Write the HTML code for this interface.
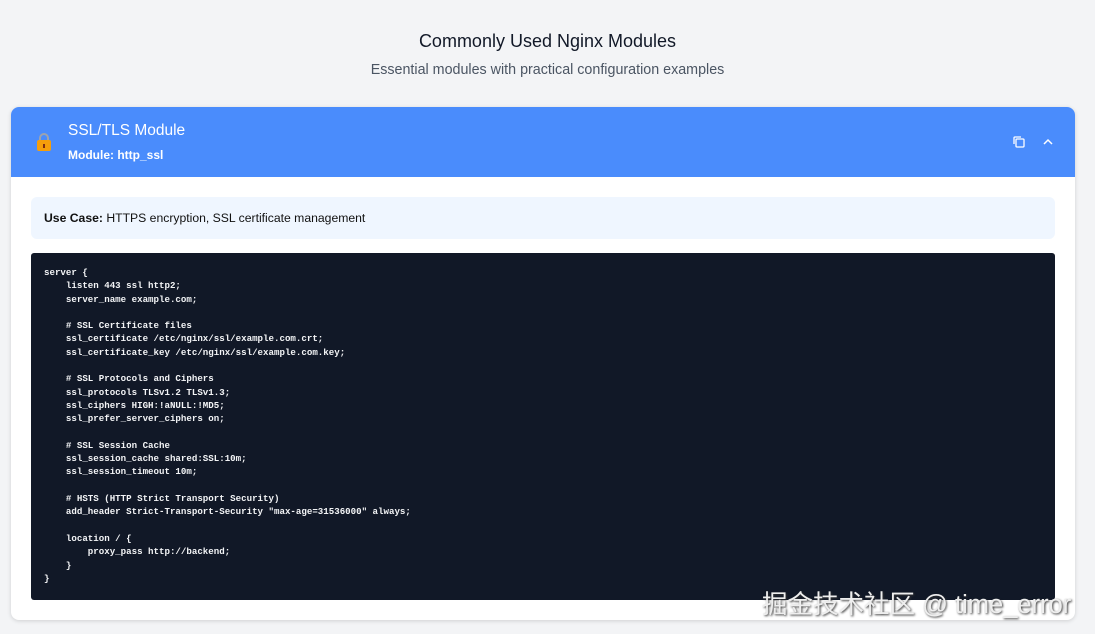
<!DOCTYPE html>
<html><head><meta charset="utf-8"><style>
body{margin:0;width:1095px;height:634px;background:#f3f4f6;font-family:"Liberation Sans",sans-serif;position:relative;overflow:hidden}
h1{position:absolute;top:31px;left:0;width:1095px;text-align:center;margin:0;font-size:18px;font-weight:400;color:#111827}
.sub{position:absolute;top:62px;left:0;width:1095px;text-align:center;font-size:14.3px;color:#4b5563}
.card{position:absolute;left:11px;top:107px;width:1064px;height:513px;background:#fff;border-radius:8px;box-shadow:0 1px 4px rgba(0,0,0,.15);overflow:hidden}
.hd{height:70px;background:#4a8cfc;position:relative;color:#fff}
.t{position:absolute;left:57px;top:15px;font-size:15.5px}
.m{position:absolute;left:57px;top:41px;font-size:12px;font-weight:bold}
.uc{position:absolute;left:20px;top:90px;width:1024px;height:42px;background:#eff6ff;border-radius:6px;font-size:12.2px;line-height:42px;box-sizing:border-box;padding-left:13px;color:#111}
pre{position:absolute;left:20px;top:146px;width:1024px;height:347px;margin:0;background:#111827;border-radius:3px;color:#f3f4f6;font-family:"Liberation Mono","DejaVu Sans Mono",monospace;font-size:9.15px;line-height:13.3px;padding:13px 13px;box-sizing:border-box;font-weight:bold}
.wm{position:absolute;left:762px;top:584px;font-size:25.5px;color:#eee;font-family:"Liberation Sans","Noto Sans CJK SC",sans-serif;text-shadow:1px 1px 2px #333}
</style></head><body>
<h1>Commonly Used Nginx Modules</h1>
<div class="sub">Essential modules with practical configuration examples</div>
<div class="card">
<div class="hd">
<svg style="position:absolute;left:25px;top:25px" width="16" height="20" viewBox="0 0 16 20"><path d="M4 9V6a4 4 0 0 1 8 0v3" fill="none" stroke="#9ca3af" stroke-width="2"/><rect x="1" y="8" width="14" height="11" rx="2" fill="#f59e0b"/><rect x="7" y="12" width="2" height="4" fill="#7c2d12"/></svg>
<div class="t">SSL/TLS Module</div>
<div class="m">Module: http_ssl</div>
<svg style="position:absolute;left:1001px;top:28px" width="14" height="14" viewBox="0 0 14 14" fill="none" stroke="#fff" stroke-width="1.3"><rect x="4" y="4" width="8" height="8" rx="1"/><path d="M9 2H3a1 1 0 0 0-1 1v6"/></svg>
<svg style="position:absolute;left:1031px;top:30px" width="12" height="10" viewBox="0 0 12 10" fill="none" stroke="#fff" stroke-width="1.5"><path d="M2 7l4-4 4 4"/></svg>
</div>
<div class="uc"><b>Use Case:</b> HTTPS encryption, SSL certificate management</div>
<pre>server {
    listen 443 ssl http2;
    server_name example.com;

    # SSL Certificate files
    ssl_certificate /etc/nginx/ssl/example.com.crt;
    ssl_certificate_key /etc/nginx/ssl/example.com.key;

    # SSL Protocols and Ciphers
    ssl_protocols TLSv1.2 TLSv1.3;
    ssl_ciphers HIGH:!aNULL:!MD5;
    ssl_prefer_server_ciphers on;

    # SSL Session Cache
    ssl_session_cache shared:SSL:10m;
    ssl_session_timeout 10m;

    # HSTS (HTTP Strict Transport Security)
    add_header Strict-Transport-Security "max-age=31536000" always;

    location / {
        proxy_pass http://backend;
    }
}</pre>
</div>
<div class="wm">掘金技术社区 @ time_error</div>
</body></html>
